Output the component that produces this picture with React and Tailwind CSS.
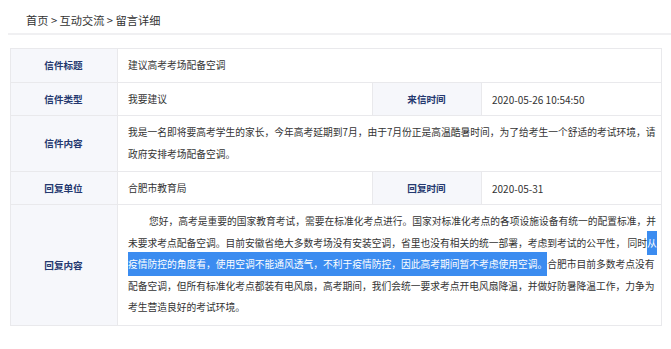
const label = "bg-[#f6f7fb] border border-[#e9e9ec] text-center font-bold text-[#24386f] text-[9.6px]";
const cell = "border border-[#e9e9ec] pl-[10.5px] pr-2 text-[#333] text-[9.75px]";
const sel = "bg-[#3b8cf0] text-white py-[5px]";

export default function App() {
  return (
    <div className="w-[671px] h-[349px] bg-white font-['Noto_Sans_CJK_SC','Noto_Sans',sans-serif] overflow-hidden">
      <div className="ml-2 h-[35px] border-b-2 border-[#f0f0f2] flex items-center pl-[18px] pt-[7px] text-[11.2px] text-[#333]">
        首页 &gt; 互动交流 &gt; 留言详细
      </div>
      <div className="pt-[13px] pl-[9.5px]">
        <table className="border-collapse table-fixed w-[651px]">
          <colgroup>
            <col className="w-[107px]" />
            <col className="w-[255px]" />
            <col className="w-[109px]" />
            <col className="w-[180px]" />
          </colgroup>
          <tbody>
            <tr className="h-[34px]">
              <td className={label}>信件标题</td>
              <td className={cell} colSpan={3}>建议高考考场配备空调</td>
            </tr>
            <tr className="h-[33px]">
              <td className={label}>信件类型</td>
              <td className={cell}>我要建议</td>
              <td className={label}>来信时间</td>
              <td className={`${cell} text-[10px]`}>2020-05-26 10:54:50</td>
            </tr>
            <tr className="h-[55px]">
              <td className={label}>信件内容</td>
              <td className={`${cell} py-[6px] leading-[21.5px] whitespace-nowrap`} colSpan={3}>
                我是一名即将要高考学生的家长，今年高考延期到7月，由于7月份正是高温酷暑时间，为了给考生一个舒适的考试环境，请
                <br />
                政府安排考场配备空调。
              </td>
            </tr>
            <tr className="h-[33px]">
              <td className={label}>回复单位</td>
              <td className={cell}>合肥市教育局</td>
              <td className={label}>回复时间</td>
              <td className={`${cell} text-[10px]`}>2020-05-31</td>
            </tr>
            <tr className="h-[119px]">
              <td className={label}>回复内容</td>
              <td className={`${cell} py-[6px] leading-[21.5px] whitespace-nowrap`} colSpan={3}>
                <span className="inline-block w-[21px]"></span>
                您好，高考是重要的国家教育考试，需要在标准化考点进行。国家对标准化考点的各项设施设备有统一的配置标准，并
                <br />
                未要求考点配备空调。目前安徽省绝大多数考场没有安装空调，省里也没有相关的统一部署，考虑到考试的公平性， 同时
                <span className={sel}>从</span>
                <br />
                <span className={sel}>
                  疫情防控的角度看，使用空调不能通风透气，不利于疫情防控，因此高考期间暂不考虑使用空调。
                </span>
                合肥市目前多数考点没有
                <br />
                配备空调，但所有标准化考点都装有电风扇，高考期间，我们会统一要求考点开电风扇降温，并做好防暑降温工作，力争为
                <br />
                考生营造良好的考试环境。
              </td>
            </tr>
          </tbody>
        </table>
      </div>
    </div>
  );
}
